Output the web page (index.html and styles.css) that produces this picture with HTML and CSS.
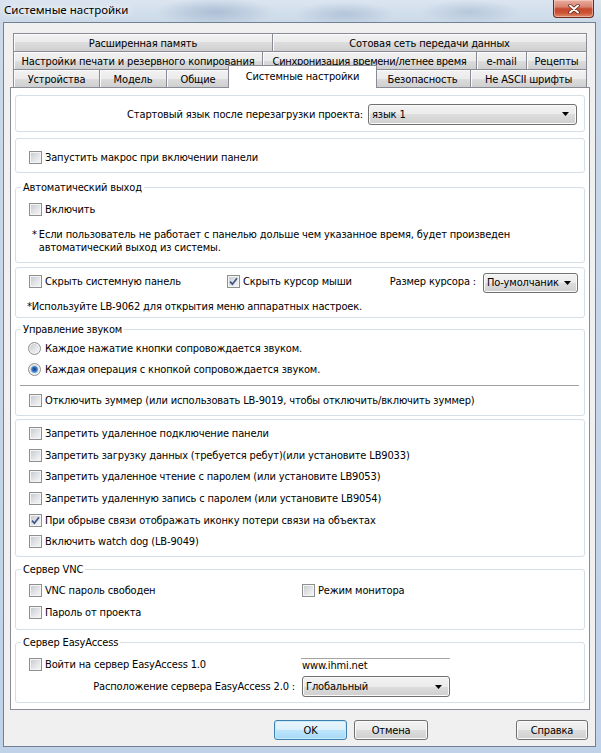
FILE: index.html
```html
<!DOCTYPE html>
<html lang="ru">
<head>
<meta charset="utf-8">
<title>Системные настройки</title>
<link rel="stylesheet" href="styles.css">
</head>
<body>
<div class="window">
  <div class="titlebar">
    <span class="title">Системные настройки</span>
    <span class="close">
      <svg width="12" height="10" viewBox="0 0 12 10"><path d="M2 1.5 L10 8.5 M10 1.5 L2 8.5" stroke="#5a1c12" stroke-width="3.4" stroke-linecap="round"/><path d="M2 1.5 L10 8.5 M10 1.5 L2 8.5" stroke="#ffffff" stroke-width="2" stroke-linecap="round"/></svg>
    </span>
  </div>
  <div class="client">
    <div class="tabs">
      <div class="tabrow r1">
        <div class="tab">Расширенная память</div>
        <div class="tab">Сотовая сеть передачи данных</div>
      </div>
      <div class="tabrow r2">
        <div class="tab">Настройки печати и резервного копирования</div>
        <div class="tab">Синхронизация времени/летнее время</div>
        <div class="tab">e-mail</div>
        <div class="tab">Рецепты</div>
      </div>
      <div class="tabrow r3">
        <div class="tab">Устройства</div>
        <div class="tab">Модель</div>
        <div class="tab">Общие</div>
        <div class="tab active">Системные настройки</div>
        <div class="tab">Безопасность</div>
        <div class="tab">Не ASCII шрифты</div>
      </div>
    </div>

    <div class="panel">
      <div class="group g1">
        <span>Стартовый язык после перезагрузки проекта:</span>
        <div class="combo lang"><span>язык 1</span><svg class="arrow" width="7" height="4" viewBox="0 0 7 4"><path d="M0 0 H7 L3.5 4 Z" fill="#000"/></svg></div>
      </div>

      <div class="group g2">
        <div class="row"><span class="cb"></span>Запустить макрос при включении панели</div>
      </div>

      <div class="group fs g3">
        <span class="legend">Автоматический выход</span>
        <div class="row"><span class="cb"></span>Включить</div>
        <div class="note3"><span class="star">*</span><span>Если пользователь не работает с панелью дольше чем указанное время, будет произведен<br>автоматический выход из системы.</span></div>
      </div>

      <div class="group g4">
        <div class="row cursor-row">
          <div class="row col-a"><span class="cb"></span>Скрыть системную панель</div>
          <div class="row col-b"><span class="cb"><svg width="9" height="9" viewBox="0 0 9 9"><path d="M1 4.6 L3.4 7.2 L8 1.2" fill="none" stroke="#3e5688" stroke-width="1.7"/></svg></span>Скрыть курсор мыши</div>
          <span>Размер курсора :</span>
          <div class="combo size"><span>По-умолчаник</span><svg class="arrow" width="7" height="4" viewBox="0 0 7 4"><path d="M0 0 H7 L3.5 4 Z" fill="#000"/></svg></div>
        </div>
        <div class="note4">*Используйте LB-9062 для открытия меню аппаратных настроек.</div>
      </div>

      <div class="group fs g5">
        <span class="legend">Управление звуком</span>
        <div class="row rrow"><span class="rb"></span>Каждое нажатие кнопки сопровождается звуком.</div>
        <div class="row rrow"><span class="rb"><span class="dot"></span></span>Каждая операция с кнопкой сопровождается звуком.</div>
        <div class="sep"></div>
        <div class="row"><span class="cb"></span>Отключить зуммер (или использовать LB-9019, чтобы отключить/включить зуммер)</div>
      </div>

      <div class="group g6">
        <div class="row"><span class="cb"></span>Запретить удаленное подключение панели</div>
        <div class="row"><span class="cb"></span>Запретить загрузку данных (требуется ребут)(или установите LB9033)</div>
        <div class="row"><span class="cb"></span>Запретить удаленное чтение с паролем (или установите LB9053)</div>
        <div class="row"><span class="cb"></span>Запретить удаленную запись с паролем (или установите LB9054)</div>
        <div class="row"><span class="cb"><svg width="9" height="9" viewBox="0 0 9 9"><path d="M1 4.6 L3.4 7.2 L8 1.2" fill="none" stroke="#3e5688" stroke-width="1.7"/></svg></span>При обрыве связи отображать иконку потери связи на объектах</div>
        <div class="row"><span class="cb"></span>Включить watch dog (LB-9049)</div>
      </div>

      <div class="group fs g7">
        <span class="legend">Сервер VNC</span>
        <div class="row">
          <div class="row vnc-a"><span class="cb"></span>VNC пароль свободен</div>
          <div class="row vnc-b"><span class="cb"></span>Режим монитора</div>
        </div>
        <div class="row"><span class="cb"></span>Пароль от проекта</div>
      </div>

      <div class="group fs g8">
        <span class="legend">Сервер EasyAccess</span>
        <div class="ea-grid">
          <div class="row ea-r1"><span class="cb"></span>Войти на сервер EasyAccess 1.0</div>
          <div class="ea-input">www.ihmi.net</div>
          <div class="ea-label">Расположение сервера EasyAccess 2.0 :</div>
          <div class="combo ea-sel"><span>Глобальный</span><svg class="arrow" width="7" height="4" viewBox="0 0 7 4"><path d="M0 0 H7 L3.5 4 Z" fill="#000"/></svg></div>
        </div>
      </div>
    </div>

    <div class="footer">
      <div class="btn ok">OK</div>
      <div class="btn cancel">Отмена</div>
      <div class="btn help">Справка</div>
    </div>
  </div>
</div>
</body>
</html>
```

FILE: styles.css
```css
* { box-sizing: border-box; }

body {
  margin: 0;
  font-family: "DejaVu Sans Condensed", "Liberation Sans", sans-serif;
  font-size: 11px;
  letter-spacing: -0.15px;
  color: #000;
}

.window {
  width: 601px;
  height: 753px;
  overflow: hidden;
  display: flex;
  flex-direction: column;
  background:
    radial-gradient(ellipse 60px 14px at 215px 12px, rgba(140,165,195,0.55), rgba(140,165,195,0)),
    radial-gradient(ellipse 50px 12px at 345px 14px, rgba(150,172,200,0.5), rgba(150,172,200,0)),
    radial-gradient(ellipse 50px 12px at 470px 12px, rgba(150,172,200,0.45), rgba(150,172,200,0)),
    linear-gradient(to bottom, #dbe5f0 0, #cbd9e8 22px, #bfd2e8 100%);
}

/* ---------- title bar ---------- */
.titlebar {
  height: 22px;
  flex: none;
  display: flex;
  justify-content: space-between;
  align-items: flex-start;
  padding-left: 4px;
}
.title {
  font-family: "Noto Sans", "Open Sans", sans-serif;
  font-size: 11.5px;
  letter-spacing: 0;
  line-height: 20px;
  color: #000;
  text-shadow: 0 0 6px #ffffff, 0 0 10px #ffffff;
}
.close {
  width: 41px;
  height: 18px;
  margin-right: 7px;
  border: 1px solid #6a2c22;
  border-top: none;
  border-radius: 0 0 4px 4px;
  background: linear-gradient(to bottom, #e8ad9f 0, #d98471 40%, #c6492f 52%, #cc5236 75%, #e08a6a 100%);
  box-shadow: inset 0 0 0 1px rgba(255,220,210,0.5);
  display: flex;
  align-items: center;
  justify-content: center;
}

/* ---------- client ---------- */
.client {
  margin: 0 5px 0 3px;
  height: 725px;
  border: 1px solid #6f8193;
  background: #f0f0f0;
  padding: 10px 5px 6px 6px;
  display: flex;
  flex-direction: column;
}

/* ---------- tabs ---------- */
.tabs { margin: 0 3px; }
.tabrow {
  display: grid;
  height: 18px;
}
.r1 { grid-template-columns: 260px 1fr; }
.r2 { grid-template-columns: 250px 214px 50px 1fr; }
.r3 { grid-template-columns: 87px 67px 63px 145px 96px 1fr; }

.tab {
  border: 1px solid #898c95;
  border-bottom: none;
  margin-left: -1px;
  background: linear-gradient(to bottom, #f2f2f2 0, #ebebeb 50%, #dddddd 50%, #cfcfcf 100%);
  box-shadow: inset 1px 1px 0 #fbfbfb;
  display: flex;
  align-items: center;
  justify-content: center;
  white-space: nowrap;
  line-height: 13px;
  padding-top: 1px;
}
.r2 .tab:nth-child(2) { letter-spacing: -0.3px; }
.tabrow .tab:first-child { margin-left: 0; }
.tab.active {
  position: relative;
  z-index: 2;
  margin: -4px -2px -1px -2px;
  background: #ffffff;
  box-shadow: none;
  padding-top: 0;
  padding-bottom: 2px;
}

/* ---------- panel ---------- */
.panel {
  height: 623px;
  border: 1px solid #898c95;
  background: #ffffff;
  padding: 7px 4px 6px 4px;
  display: flex;
  flex-direction: column;
}

.group {
  border: 1px solid #d5dfe5;
  border-radius: 3px;
  flex: none;
}
.fs { position: relative; }
.legend {
  position: absolute;
  top: -7px;
  left: 5px;
  padding: 0 2px;
  background: #ffffff;
  line-height: 13px;
  white-space: nowrap;
}

.row {
  display: flex;
  align-items: center;
  gap: 3px;
  white-space: nowrap;
}

/* checkbox */
.cb {
  width: 13px;
  height: 13px;
  flex: none;
  border: 1px solid #8e8f8f;
  background: linear-gradient(135deg, #c3c7cd 0, #e6e7e9 60%, #f7f7f7 100%);
  box-shadow: inset 0 0 0 1px #f4f4f4;
  display: flex;
  align-items: center;
  justify-content: center;
}
/* radio */
.rb {
  width: 13px;
  height: 13px;
  flex: none;
  border: 1px solid #8e8f8f;
  border-radius: 50%;
  background: linear-gradient(135deg, #c3c7cd 0, #e6e7e9 60%, #f7f7f7 100%);
  box-shadow: inset 0 0 0 1px #f4f4f4;
  display: flex;
  align-items: center;
  justify-content: center;
}
.dot {
  width: 7px;
  height: 7px;
  border-radius: 50%;
  background: radial-gradient(circle at 50% 45%, #1a3d86 0, #2c63b2 35%, #63a7e4 70%, #a9d3f3 100%);
}

/* combobox */
.combo {
  display: flex;
  align-items: center;
  justify-content: space-between;
  border: 1px solid #707070;
  border-radius: 3px;
  background: linear-gradient(to bottom, #f2f2f2 0, #ebebeb 50%, #dddddd 50%, #cfcfcf 100%);
  box-shadow: inset 0 0 0 1px #fafafa;
  padding: 0 7px 0 3px;
  white-space: nowrap;
}

/* G1 */
.g1 {
  height: 37px;
  display: flex;
  align-items: center;
  justify-content: flex-end;
  gap: 5px;
  padding: 1px 7px 0 0;
}
.lang { width: 209px; height: 21px; }

/* G2 */
.g2 {
  height: 35px;
  margin-top: 6px;
  padding: 8px 0 0 13px;
}
.g2 .row { height: 20px; }

/* G3 */
.g3 {
  height: 76px;
  margin-top: 14px;
  padding: 11px 0 0 13px;
}
.g3 .row { height: 20px; }
.note3 {
  display: flex;
  gap: 2px;
  margin-top: 10px;
  padding-left: 3px;
  line-height: 12.5px;
}

/* G4 */
.g4 {
  height: 51px;
  margin-top: 4px;
  padding: 3px 6px 0 13px;
}
.cursor-row { height: 21px; gap: 7px; }
.col-a { width: 191px; }
.col-b { flex: 1; }
.size { width: 95px; height: 20px; margin-top: 2px; padding-right: 6px; }
.note4 {
  margin-top: 8px;
  margin-left: -2px;
  line-height: 13px;
}

/* G5 */
.g5 {
  height: 87px;
  margin-top: 11px;
  padding: 8px 5px 0 12px;
}
.rrow { height: 21px; gap: 4px; }
.sep {
  margin: 5px 0 0 -8px;
  border-top: 1px solid #a0a0a0;
}
.g5 > .row:last-child { height: 20px; margin: 4px 0 0 1px; }

/* G6 */
.g6 {
  height: 138px;
  margin-top: 3px;
  padding: 3px 0 0 13px;
}
.g6 .row { height: 21.6px; }

/* G7 */
.g7 {
  height: 61px;
  margin-top: 12px;
  padding: 9px 0 0 13px;
}
.g7 .row { height: 22px; }
.vnc-a { width: 270px; }

/* G8 */
.g8 {
  height: 61px;
  margin-top: 12px;
  padding: 10px 0 0 13px;
}
.ea-grid {
  display: grid;
  grid-template-columns: 272px 150px;
  grid-template-rows: 22px 23px;
  align-items: center;
}
.ea-input {
  height: 16px;
  margin-top: 4px;
  width: 149px;
  border-top: 1px solid #a5a5a5;
  line-height: 14px;
  padding-left: 1px;
}
.ea-label {
  text-align: right;
  padding-right: 6px;
  white-space: nowrap;
}
.ea-sel {
  width: 148px;
  height: 21px;
  margin-left: 1px;
}

/* ---------- footer ---------- */
.footer {
  display: flex;
  justify-content: flex-end;
  gap: 7px;
  margin-top: 10px;
  padding-right: 2px;
}
.btn {
  height: 20px;
  border: 1px solid #707070;
  border-radius: 3px;
  background: linear-gradient(to bottom, #f2f2f2 0, #ebebeb 50%, #dddddd 50%, #cfcfcf 100%);
  box-shadow: inset 0 0 0 1px #fbfbfb;
  display: flex;
  align-items: center;
  justify-content: center;
}
.ok {
  width: 73px;
  border-color: #3c7fb1;
  background: linear-gradient(to bottom, #eaf6fd 0, #d9f0fc 50%, #bee6fd 50%, #a7d9f5 100%);
  box-shadow: inset 0 0 0 1px #c8ebfc;
}
.cancel { width: 74px; }
.help { width: 72px; margin-left: 81px; }
```
